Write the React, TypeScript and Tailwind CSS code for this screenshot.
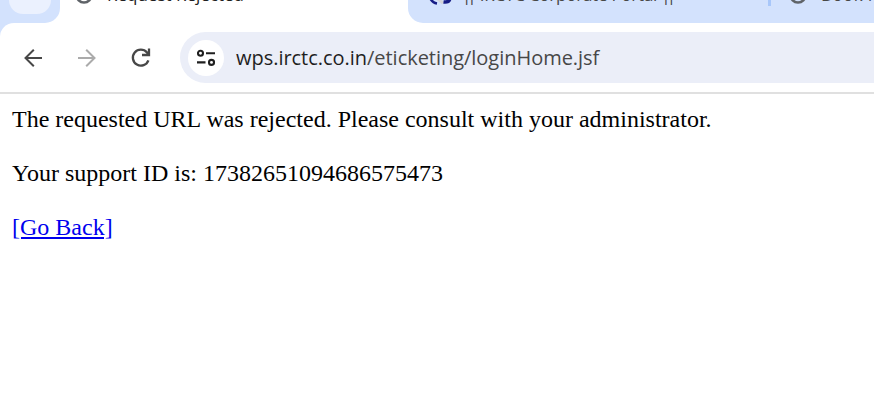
import React from "react";

const uiFont = "font-['Open_Sans','Noto_Sans',sans-serif]";

function Globe({ className }: { className: string }) {
  return (
    <svg className={className} viewBox="0 0 18 18" fill="none">
      <circle cx="9" cy="9" r="7.5" stroke="#5f6368" strokeWidth="2.6" />
    </svg>
  );
}

function TabStrip() {
  return (
    <div className={`flex h-[23px] overflow-hidden bg-white ${uiFont}`}>
      <div className="flex w-[60px] shrink-0 items-start justify-center rounded-br-[15px] bg-[#d3e2fd]">
        <div className="h-[14px] w-[42px] rounded-b-[14px] bg-[#ebf1fe]" />
      </div>
      <div className="flex w-[348px] shrink-0 items-start pl-[15px]">
        <Globe className="-mt-[14px] h-[18px] w-[18px] shrink-0" />
        <span className="-mt-[17px] ml-[14px] whitespace-nowrap text-[17px] leading-[24px] text-[#1f1f1f]">
          Request Rejected
        </span>
      </div>
      <div className="flex min-w-0 flex-1 items-start overflow-hidden rounded-bl-[15px] bg-[#d3e2fd] pl-[20px]">
        <svg className="-mt-[19px] h-[24px] w-[24px] shrink-0" viewBox="0 0 24 24" fill="none">
          <path d="M2 17c1.500 3 4 5 7 5.500" stroke="#171d86" strokeWidth="2.500" />
          <path d="M10 18l5 4" stroke="#d4d4d8" strokeWidth="3" />
          <path d="M15.500 21c4 .5 6-.5 6.500-4" stroke="#171d86" strokeWidth="3.500" />
        </svg>
        <span className="-mt-[17px] ml-[10px] w-[306px] shrink-0 whitespace-nowrap text-[17px] leading-[24px] text-[#474747]">
          <span className="tracking-[-4px]">||</span>
          <span className="ml-[3px] tracking-[-0.24px]"> IRCTC Corporate Portal </span>
          <span className="tracking-[-4px]">||</span>
        </span>
        <div className="h-[6px] w-[3px] shrink-0 bg-[#a8c7fa]" />
        <Globe className="-mt-[14px] ml-[18px] h-[18px] w-[18px] shrink-0" />
        <span className="-mt-[17px] ml-[14px] whitespace-nowrap text-[17px] leading-[24px] tracking-[0.4px] text-[#474747]">
          Book N
        </span>
      </div>
    </div>
  );
}

function Toolbar() {
  return (
    <div className="bg-[linear-gradient(to_right,#d3e2fd_20px,#fff_20px)]">
      <div className="flex h-[71px] items-start rounded-tl-[14px] border-b-2 border-[#e0e0e0] bg-white pl-[24px] pt-[9px]">
        <div className="flex h-[51px] shrink-0 items-center">
          <svg className="h-[18px] w-[18px]" viewBox="0 0 18 18" fill="none" stroke="#474747" strokeWidth="2">
            <path d="M18 9H1.500M9.800 .7L1.500 9l8.300 8.300" />
          </svg>
          <svg className="ml-[36px] h-[18px] w-[18px]" viewBox="0 0 18 18" fill="none" stroke="#ababab" strokeWidth="2">
            <path d="M0 9h16.500M8.200 .7L16.500 9l-8.300 8.300" />
          </svg>
          <svg className="ml-[35px] h-[20px] w-[20px]" viewBox="0 0 20 20" fill="none" stroke="#474747" strokeWidth="2.3">
            <path d="M17.400 12.300A8 8 0 1 1 16 4.500l1.800 2M18 .5v6.500h-7" />
          </svg>
        </div>
        <div className={`ml-[29px] flex h-[51px] flex-1 items-center rounded-l-full bg-[#ebeef8] pl-[8px] ${uiFont}`}>
          <div className="flex h-[36px] w-[36px] shrink-0 items-center justify-center rounded-full bg-white">
            <svg className="h-[18px] w-[18px]" viewBox="0 0 18 18" fill="none" stroke="#1f1f1f" strokeWidth="2.1">
              <circle cx="3.5" cy="4.2" r="2.5" />
              <path d="M9 4.200h9M0 13.400h8.500" />
              <circle cx="14.5" cy="13.4" r="2.5" />
            </svg>
          </div>
          <span className="mt-[1px] ml-[12px] whitespace-nowrap text-[20px] font-normal leading-[28px] tracking-[-0.03px] text-[#474747]">
            <span className="text-[#1f1f1f]">wps.irctc.co.in</span>/eticketing/loginHome.jsf
          </span>
        </div>
      </div>
    </div>
  );
}

export default function App() {
  return (
    <div className="h-[417px] w-[874px] overflow-hidden bg-white">
      <TabStrip />
      <Toolbar />
      <main className="flex flex-col items-start gap-[27px] pl-[12px] pt-[12px] font-['Liberation_Serif','Times_New_Roman',serif] text-[24px] leading-[27px] text-black">
        <p>The requested URL was rejected. Please consult with your administrator.</p>
        <p>Your support ID is: 17382651094686575473</p>
        <a href="#" className="text-[#0000ee] underline decoration-2 underline-offset-[2px]">[Go Back]</a>
      </main>
    </div>
  );
}
